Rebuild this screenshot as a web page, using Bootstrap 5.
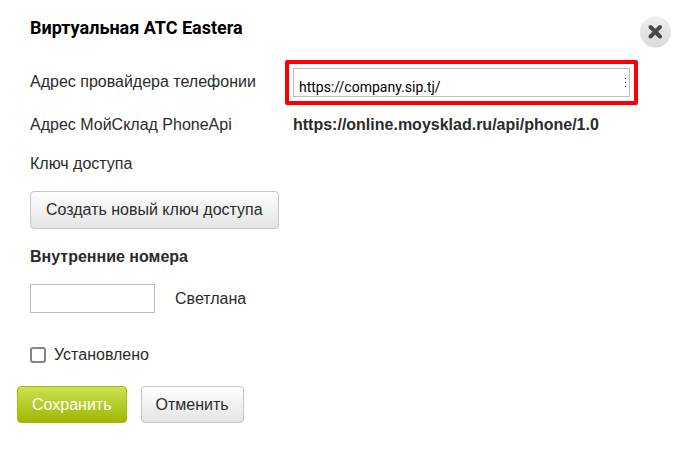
<!DOCTYPE html>
<html lang="ru">
<head>
<meta charset="utf-8">
<meta name="viewport" content="width=device-width, initial-scale=1">
<title>Виртуальная АТС Eastera</title>
<link href="https://cdn.jsdelivr.net/npm/bootstrap@5.3.0/dist/css/bootstrap.min.css" rel="stylesheet">
<style>
body { font-family: "Liberation Sans", Arial, sans-serif; font-size: 16px; line-height: 24px; color: #2b2b2b; background: #fff; }
.dialog-head { padding: 16px 8px 0 30px; }
.dialog-title { font: 700 18px/24px Roboto, sans-serif; color: #000; }
.close-btn { width: 32px; height: 32px; }
.dialog-body { padding: 20px 49px 0 30px; }
.label-col { width: 263px; }
.field-row { height: 30px; }
.field-row label { line-height: 28px; }
.box-input { height: 29px; border: 1px solid #bdbdbd; border-radius: 0; background: #fff; color: #000; }
.url-input { font: 14px/20px Roboto, sans-serif; padding: 8px 16px 0 5px; }
.marked { border: 4px solid #f90006; border-radius: 2px; padding: 4px; margin: -8px; }
.drag-dots { right: 7px; top: 14px; }
.ext-input { width: 125px; }
.soft-btn { --bs-btn-font-size: 16px; --bs-btn-line-height: 24px; --bs-btn-color: #2b2b2b; --bs-btn-hover-color: #2b2b2b; --bs-btn-border-color: #c6c6c6; --bs-btn-hover-border-color: #aaa; --bs-btn-border-radius: 4px; --bs-btn-padding-x: 14px; --bs-btn-padding-y: 6px; background: linear-gradient(#fefefe, #e4e4e4); }
.key-btn { --bs-btn-padding-x: 15px; }
.save-btn { --bs-btn-color: #fff; --bs-btn-hover-color: #fff; --bs-btn-border-color: #a3bb0b; --bs-btn-hover-border-color: #8fa500; background: linear-gradient(#cbe052, #9fb800); }
.form-check-input.check-box { width: 16px; height: 16px; border: 2px solid #858585; border-radius: 3px; }
.section-title { font-size: 16px; line-height: 25px; }
.check-row { margin-top: 30px; }
.dialog-foot { padding: 19px 17px 0; gap: 14px; }
.dialog-foot .soft-btn { --bs-btn-line-height: 23px; }
.stack { gap: 15px; }
</style>
</head>
<body>
<form>
  <header class="dialog-head d-flex justify-content-between align-items-start">
    <h1 class="dialog-title m-0">Виртуальная АТС Eastera</h1>
    <button type="button" class="close-btn btn p-0 border-0 d-flex" aria-label="Закрыть">
      <svg width="32" height="32" viewBox="0 0 32 32" aria-hidden="true">
        <defs><linearGradient id="disc" x1="0" y1="0" x2="0" y2="1"><stop stop-color="#eeeeee"/><stop offset="1" stop-color="#dadada"/></linearGradient></defs>
        <circle cx="16.500" cy="16" r="15.500" fill="url(#disc)"/>
        <path d="M11.500 11 21 20.500M21 11 11.500 20.500" stroke="#484848" stroke-width="4" stroke-linecap="round"/>
      </svg>
    </button>
  </header>

  <main class="dialog-body">
    <div class="stack d-flex flex-column align-items-start">
      <div class="field-row d-flex align-items-start w-100">
        <label class="label-col flex-shrink-0" for="provider">Адрес провайдера телефонии</label>
        <div class="marked position-relative flex-grow-1 d-flex">
          <input id="provider" type="text" class="box-input url-input w-100" value="https://company.sip.tj/">
          <svg class="drag-dots position-absolute" width="2" height="11" aria-hidden="true"><path d="M0 0h1v1H0zM0 4h1v1H0zM0 8h1v1H0z" fill="#111"/></svg>
        </div>
      </div>
      <div class="d-flex w-100">
        <div class="label-col flex-shrink-0">Адрес МойСклад PhoneApi</div>
        <div class="fw-bold">https://online.moysklad.ru/api/phone/1.0</div>
      </div>
      <div>Ключ доступа</div>
      <button type="button" class="btn soft-btn key-btn">Создать новый ключ доступа</button>
      <h2 class="section-title fw-bold m-0">Внутренние номера</h2>
      <div class="d-flex align-items-center">
        <input id="ext" type="text" class="box-input ext-input px-2">
        <label class="ms-3 ps-1" for="ext">Светлана</label>
      </div>
    </div>
    <div class="check-row d-flex align-items-center">
      <input id="installed" type="checkbox" class="form-check-input check-box m-0">
      <label class="ms-2" for="installed">Установлено</label>
    </div>
  </main>

  <footer class="dialog-foot d-flex">
    <button type="submit" class="btn soft-btn save-btn">Сохранить</button>
    <button type="button" class="btn soft-btn">Отменить</button>
  </footer>
</form>
<script src="https://cdn.jsdelivr.net/npm/bootstrap@5.3.0/dist/js/bootstrap.bundle.min.js"></script>
</body>
</html>
